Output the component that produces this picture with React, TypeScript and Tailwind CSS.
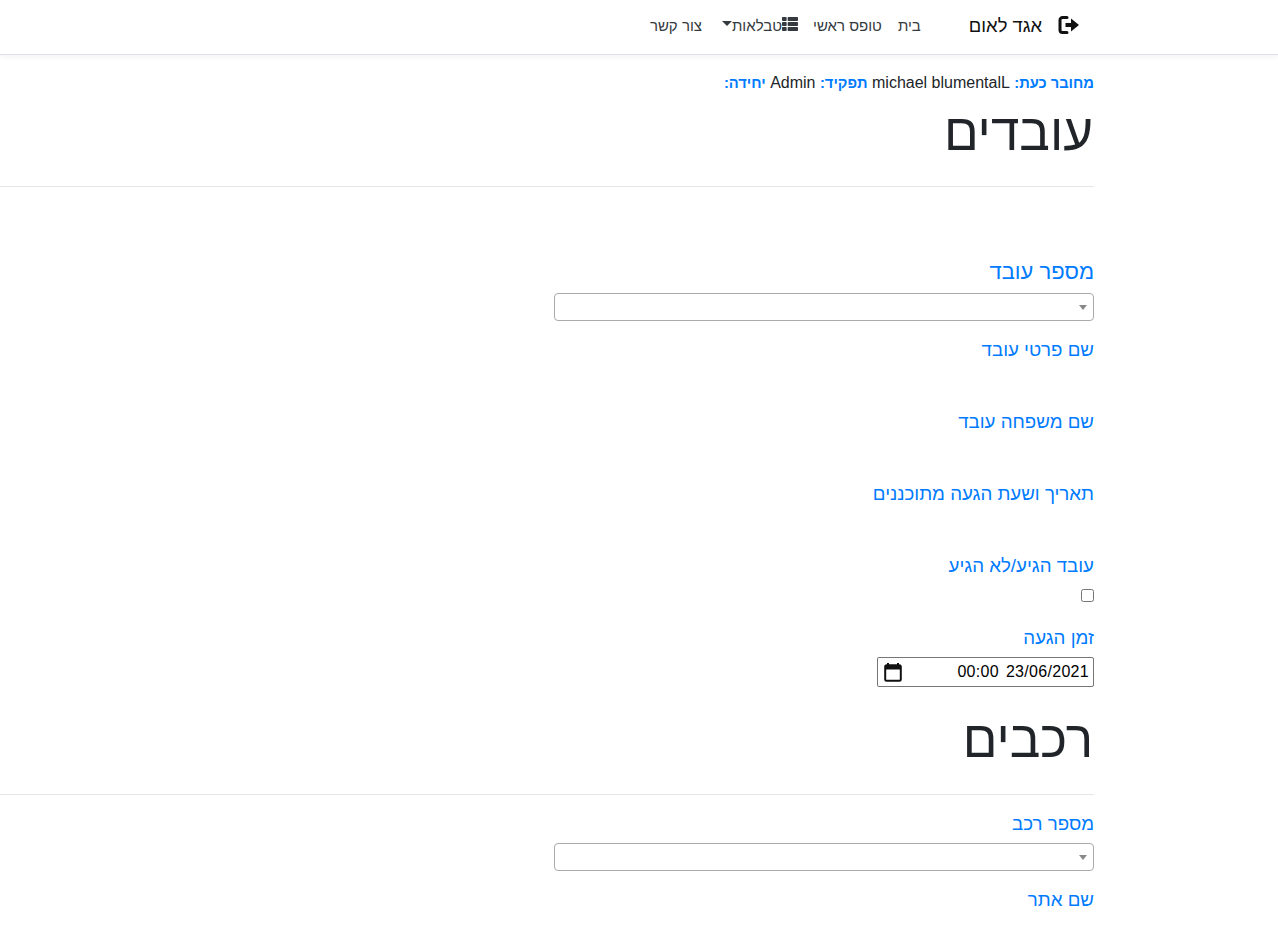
import { FaThList } from "react-icons/fa";

function FieldLabel({ children, big }: { children: string; big?: boolean }) {
  return (
    <label className={`block leading-[30px] text-[#007bff] ${big ? "text-[22px]" : "text-[18.7px]"}`}>
      {children}
    </label>
  );
}

function SelectBox() {
  return (
    <div className="relative h-[28px] w-[540px] rounded-[4px] border border-[#aaaaaa] bg-white">
      <span className="absolute right-[6px] top-[11px] h-0 w-0 border-x-[4px] border-t-[5px] border-x-transparent border-t-[#888888]" />
    </div>
  );
}

function NavLink({ children }: { children: string }) {
  return <a className="whitespace-nowrap text-[15px] leading-[24px] text-[#343a40]">{children}</a>;
}

function Section({ children }: { children: string }) {
  return <h1 className="pr-[1px] text-[51.2px] font-normal leading-[67px] text-[#212529]">{children}</h1>;
}

export default function App() {
  return (
    <div dir="rtl" className="h-[932px] overflow-hidden bg-white font-['Liberation_Sans',Arial,sans-serif] text-[#212529]">
      <nav className="flex h-[55px] items-center border-b border-[#dee2e6] pb-[3px] pr-[198px] shadow-[0_2px_6px_rgba(0,0,0,0.05)]">
        <svg viewBox="0 0 22 20" className="-mt-[1px] h-[20px] w-[22px]" fill="none">
          <path d="M9 2.500H4.500A2.500 2.500 0 0 0 2 5v10a2.500 2.500 0 0 0 2.500 2.500H9" stroke="#111" strokeWidth="3" strokeLinecap="round" />
          <path d="M7.500 8H13V3.500L21 10l-8 6.500V12H7.500z" fill="#111" />
        </svg>
        <span className="mr-[16px] text-[18.4px] leading-[30px] text-[#111111]">אגד לאום</span>
        <div className="mr-[48px] flex items-center">
          <NavLink>בית</NavLink>
          <div className="mr-[16px]"><NavLink>טופס ראשי</NavLink></div>
          <div className="mr-[15px] flex items-center">
            <FaThList className="-mt-[4px] h-[16px] w-[16px] text-[#343a40]" />
            <NavLink>טבלאות</NavLink>
            <span className="-mt-[4px] h-0 w-0 border-x-[5px] border-t-[5px] border-x-transparent border-t-[#343a40]" />
          </div>
          <div className="mr-[20px]"><NavLink>צור קשר</NavLink></div>
        </div>
      </nav>

      <main className="ml-auto mr-[184px] w-[1094px] pt-[16px]">
        <p className="text-[16px] leading-[24px]">
          <b className="text-[14.7px] text-[#007bff]">מחובר כעת:</b>{" "}
          <span>michael blumentalL</span>{" "}
          <b className="text-[14.7px] text-[#007bff]">תפקיד:</b>{" "}
          <span>Admin</span>{" "}
          <b className="text-[14.7px] text-[#007bff]">יחידה:</b>
        </p>
        <div className="pt-[4px]"><Section>עובדים</Section></div>
        <hr className="mt-[20px] border-[#e5e7ea]" />

        <div className="mt-[70px]"><FieldLabel big>מספר עובד</FieldLabel></div>
        <div className="mt-[6px]"><SelectBox /></div>
        <div className="mt-[14px]"><FieldLabel>שם פרטי עובד</FieldLabel></div>
        <div className="mt-[42px]"><FieldLabel>שם משפחה עובד</FieldLabel></div>
        <div className="mt-[42px]"><FieldLabel>תאריך ושעת הגעה מתוכננים</FieldLabel></div>
        <div className="mt-[42px]"><FieldLabel>עובד הגיע/לא הגיע</FieldLabel></div>
        <div className="mt-[8px] flex h-[13px]"><input type="checkbox" className="m-0 h-[13px] w-[13px]" /></div>
        <div className="mt-[21px]"><FieldLabel>זמן הגעה</FieldLabel></div>
        <div className="mt-[4px] flex h-[30px] w-[217px] items-center justify-between rounded-[2px] border border-[#767676] pl-[6px] pr-[4px]">
          <span dir="ltr" className="flex gap-[7px] text-[16px] tracking-[0.3px] text-black">
            <span>00:00</span>
            <span>23/06/2021</span>
          </span>
          <svg viewBox="0 0 18 20" className="h-[20px] w-[18px]" fill="none">
            <path d="M4 1v3M14 1v3" stroke="#111" strokeWidth="2" />
            <rect x="1.200" y="3.200" width="15.600" height="15.600" rx="1.500" stroke="#111" strokeWidth="2" />
            <path d="M1 4h16v3.500H1z" fill="#111" />
          </svg>
        </div>

        <div className="mt-[19px]"><Section>רכבים</Section></div>
        <hr className="mt-[21px] border-[#e5e7ea]" />
        <div className="mt-[14px]"><FieldLabel>מספר רכב</FieldLabel></div>
        <div className="mt-[4px]"><SelectBox /></div>
        <div className="mt-[14px]"><FieldLabel>שם אתר</FieldLabel></div>
      </main>
    </div>
  );
}
